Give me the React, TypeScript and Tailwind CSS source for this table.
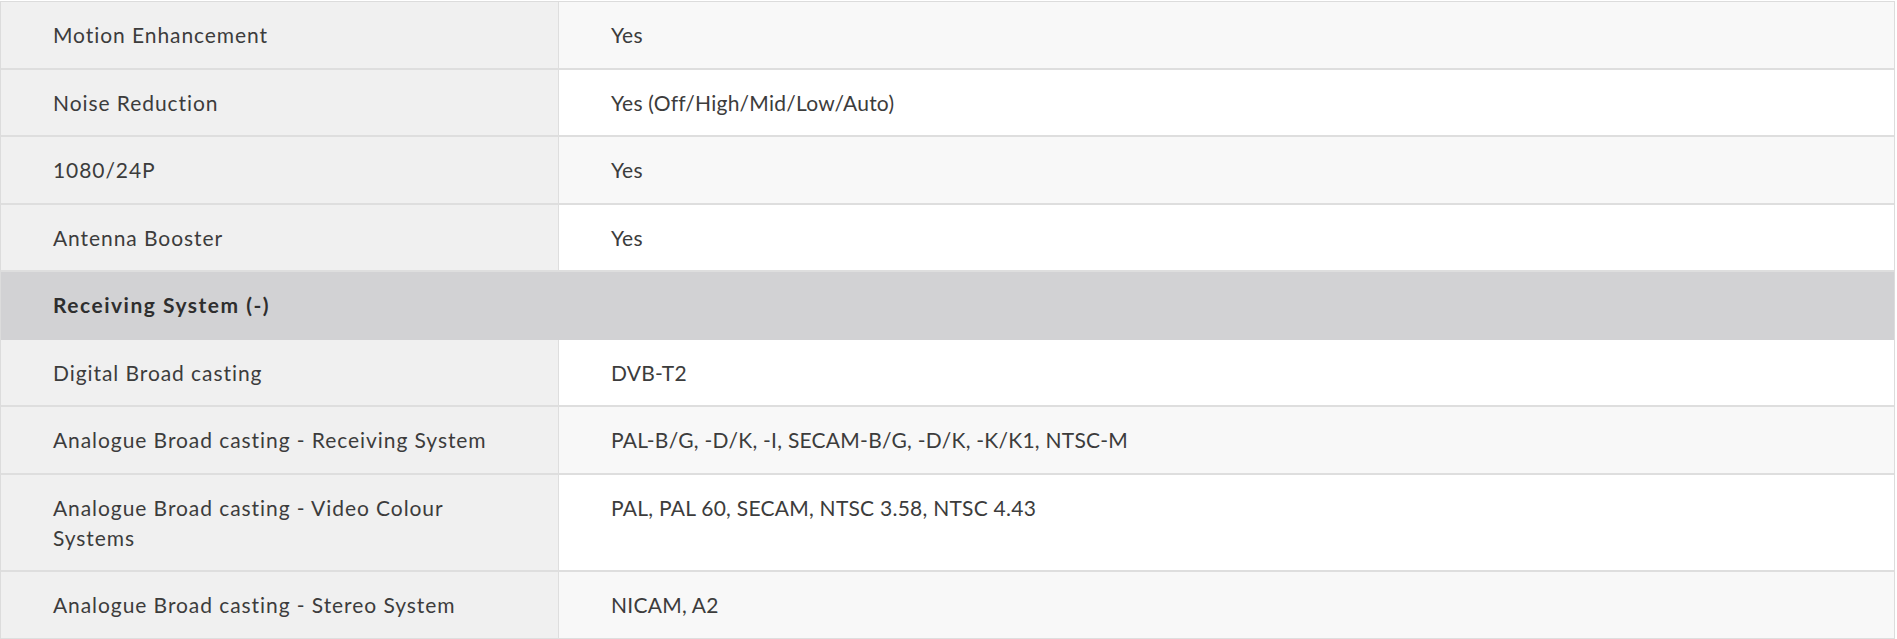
import React from 'react';

type Row =
  | { kind: 'spec'; label: string; value: string; shade: boolean }
  | { kind: 'group'; title: string };

const rows: Row[] = [
  { kind: 'spec', label: 'Motion Enhancement', value: 'Yes', shade: true },
  { kind: 'spec', label: 'Noise Reduction', value: 'Yes (Off/High/Mid/Low/Auto)', shade: false },
  { kind: 'spec', label: '1080/24P', value: 'Yes', shade: true },
  { kind: 'spec', label: 'Antenna Booster', value: 'Yes', shade: false },
  { kind: 'group', title: 'Receiving System (-)' },
  { kind: 'spec', label: 'Digital Broad casting', value: 'DVB-T2', shade: false },
  {
    kind: 'spec',
    label: 'Analogue Broad casting - Receiving System',
    value: 'PAL-B/G, -D/K, -I, SECAM-B/G, -D/K, -K/K1, NTSC-M',
    shade: true,
  },
  {
    kind: 'spec',
    label: 'Analogue Broad casting - Video Colour Systems',
    value: 'PAL, PAL 60, SECAM, NTSC 3.58, NTSC 4.43',
    shade: false,
  },
  { kind: 'spec', label: 'Analogue Broad casting - Stereo System', value: 'NICAM, A2', shade: true },
];

function SpecTable() {
  return (
    <div className="w-[1895px] border-t border-l border-r border-[#dcdcdc] font-['Lato',sans-serif] text-[21px] leading-[30px] text-[#3c3c3c]">
      {rows.map((row, i) =>
        row.kind === 'group' ? (
          <div
            key={i}
            className="border-b border-[#d2d2d4] bg-[#d2d2d4] pl-[52px] pt-[18px] pb-[18.5px] font-bold tracking-[1.5px] text-[#2e2e2e]"
          >
            {row.title}
          </div>
        ) : (
          <div key={i} className="flex border-b-2 border-[#dedede]">
            <div className="w-[558px] shrink-0 border-r border-[#dedede] bg-[#f0f0f0] pl-[52px] pr-[60px] pt-[18px] pb-[17.5px] tracking-[0.93px]">
              {row.label}
            </div>
            <div
              className={
                row.shade
                  ? 'flex-1 bg-[#f8f8f8] pl-[52px] pt-[18px] pb-[17.5px] tracking-[0.25px]'
                  : 'flex-1 bg-white pl-[52px] pt-[18px] pb-[17.5px] tracking-[0.25px]'
              }
            >
              {row.value}
            </div>
          </div>
        )
      )}
    </div>
  );
}

export default function App() {
  return (
    <div className="min-h-screen bg-white pt-px">
      <SpecTable />
    </div>
  );
}
